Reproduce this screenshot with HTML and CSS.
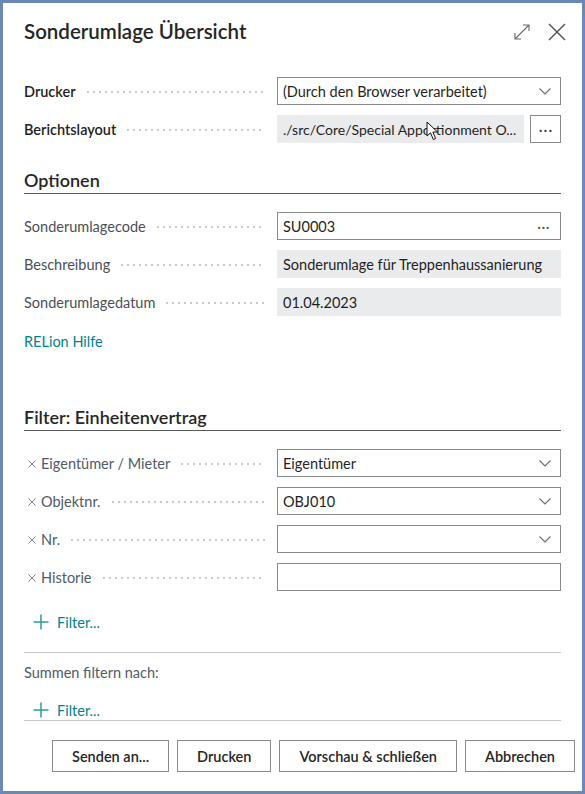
FILE: index.html
```html
<!DOCTYPE html>
<html lang="de">
<head>
<meta charset="utf-8">
<title>Sonderumlage Übersicht</title>
<link rel="stylesheet" href="styles.css">
</head>
<body>
<div class="dialog">
  <header class="header">
    <h1 class="title">Sonderumlage Übersicht</h1>
    <div class="header-icons">
      <svg class="icon-expand" width="18" height="18" viewBox="0 0 18 18" aria-hidden="true">
        <path d="M2 16 L16 2 M10 2 H16 V8 M2 10 V16 H8" fill="none" stroke="#6b6b6b" stroke-width="1.1"/>
      </svg>
      <svg class="icon-close" width="18" height="18" viewBox="0 0 18 18" aria-hidden="true">
        <path d="M1 1 L17 17 M17 1 L1 17" fill="none" stroke="#555" stroke-width="1.5"/>
      </svg>
    </div>
  </header>

  <main class="content">
    <section class="group group-top">
      <div class="row">
        <div class="label strong"><span>Drucker</span><i class="dots"></i></div>
        <div class="field box">
          <span class="value">(Durch den Browser verarbeitet)</span>
          <svg class="chev" width="12" height="7" viewBox="0 0 12 7"><path d="M0.5 0.5 L6 6 L11.5 0.5" fill="none" stroke="#6b6b6b" stroke-width="1.1"/></svg>
        </div>
      </div>
      <div class="row">
        <div class="label strong"><span>Berichtslayout</span><i class="dots"></i></div>
        <div class="field-pair">
          <div class="field readonly cursor-host">
            <span class="value path">./src/Core/Special Apportionment O...</span>
            <svg class="cursor" width="13" height="20" viewBox="0 0 13 20" aria-hidden="true">
              <path d="M1 1 V15 L4.5 11.8 L7.3 18.5 L9.6 17.5 L6.9 11 H11.5 Z" fill="#fff" stroke="#111" stroke-width="1"/>
            </svg>
          </div>
          <div class="dots-btn">···</div>
        </div>
      </div>
    </section>

    <section class="group group-options">
      <h2 class="section-title">Optionen</h2>
      <div class="rows">
        <div class="row">
          <div class="label"><span>Sonderumlagecode</span><i class="dots"></i></div>
          <div class="field box">
            <span class="value">SU0003</span>
            <span class="ellipsis">···</span>
          </div>
        </div>
        <div class="row">
          <div class="label"><span>Beschreibung</span><i class="dots"></i></div>
          <div class="field readonly"><span class="value">Sonderumlage für Treppenhaussanierung</span></div>
        </div>
        <div class="row">
          <div class="label"><span>Sonderumlagedatum</span><i class="dots"></i></div>
          <div class="field readonly"><span class="value">01.04.2023</span></div>
        </div>
        <div class="link-row"><a class="link">RELion Hilfe</a></div>
      </div>
    </section>

    <section class="group group-filter">
      <h2 class="section-title">Filter: Einheitenvertrag</h2>
      <div class="rows">
        <div class="row">
          <div class="label filter-label"><svg class="x" width="8" height="8" viewBox="0 0 8 8"><path d="M0.5 0.5 L7.5 7.5 M7.5 0.5 L0.5 7.5" stroke="#7d828a" stroke-width="1" fill="none"/></svg><span>Eigentümer / Mieter</span><i class="dots"></i></div>
          <div class="field box">
            <span class="value">Eigentümer</span>
            <svg class="chev" width="12" height="7" viewBox="0 0 12 7"><path d="M0.5 0.5 L6 6 L11.5 0.5" fill="none" stroke="#6b6b6b" stroke-width="1.1"/></svg>
          </div>
        </div>
        <div class="row">
          <div class="label filter-label"><svg class="x" width="8" height="8" viewBox="0 0 8 8"><path d="M0.5 0.5 L7.5 7.5 M7.5 0.5 L0.5 7.5" stroke="#7d828a" stroke-width="1" fill="none"/></svg><span>Objektnr.</span><i class="dots"></i></div>
          <div class="field box">
            <span class="value">OBJ010</span>
            <svg class="chev" width="12" height="7" viewBox="0 0 12 7"><path d="M0.5 0.5 L6 6 L11.5 0.5" fill="none" stroke="#6b6b6b" stroke-width="1.1"/></svg>
          </div>
        </div>
        <div class="row">
          <div class="label filter-label"><svg class="x" width="8" height="8" viewBox="0 0 8 8"><path d="M0.5 0.5 L7.5 7.5 M7.5 0.5 L0.5 7.5" stroke="#7d828a" stroke-width="1" fill="none"/></svg><span>Nr.</span><i class="dots"></i></div>
          <div class="field box">
            <span class="value"></span>
            <svg class="chev" width="12" height="7" viewBox="0 0 12 7"><path d="M0.5 0.5 L6 6 L11.5 0.5" fill="none" stroke="#6b6b6b" stroke-width="1.1"/></svg>
          </div>
        </div>
        <div class="row">
          <div class="label filter-label"><svg class="x" width="8" height="8" viewBox="0 0 8 8"><path d="M0.5 0.5 L7.5 7.5 M7.5 0.5 L0.5 7.5" stroke="#7d828a" stroke-width="1" fill="none"/></svg><span>Historie</span><i class="dots"></i></div>
          <div class="field box"><span class="value"></span></div>
        </div>
      </div>
      <div class="add-filter first-add">
        <svg class="plus" width="16" height="16" viewBox="0 0 16 16"><path d="M8 0.5 V15.5 M0.5 8 H15.5" fill="none" stroke="#2a9d9c" stroke-width="1.5"/></svg>
        <span>Filter...</span>
      </div>
    </section>

    <section class="totals">
      <div class="totals-title">Summen filtern nach:</div>
      <div class="add-filter last-add">
        <svg class="plus" width="16" height="16" viewBox="0 0 16 16"><path d="M8 0.5 V15.5 M0.5 8 H15.5" fill="none" stroke="#2a9d9c" stroke-width="1.5"/></svg>
        <span>Filter...</span>
      </div>
    </section>
  </main>

  <footer class="footer">
    <button class="btn">Senden an...</button>
    <button class="btn">Drucken</button>
    <button class="btn">Vorschau &amp; schließen</button>
    <button class="btn">Abbrechen</button>
  </footer>
</div>
</body>
</html>
```

FILE: styles.css
```css
* { box-sizing: border-box; }

html, body {
  margin: 0;
  padding: 0;
}

body {
  background: #6b88b6;
  font-family: "Lato", "Open Sans", "Liberation Sans", sans-serif;
  font-size: 14.5px;
  color: #212121;
  width: 585px;
  height: 794px;
  padding: 3px;
}

.dialog {
  background: #fff;
  width: 579px;
  height: 788px;
  display: flex;
  flex-direction: column;
}

.header {
  display: flex;
  align-items: center;
  justify-content: space-between;
  padding: 16px 16px 0 21px;
  height: 41px;
}

.title {
  margin: 0;
  font-size: 20.5px;
  font-weight: 600;
  line-height: 25px;
  color: #262626;
}

.header-icons {
  display: flex;
  align-items: center;
  gap: 17px;
}

.icon-expand { width: 18px; height: 18px; }
.icon-close { width: 18px; height: 18px; }

.content {
  padding: 0 21px;
  display: flex;
  flex-direction: column;
}

.group-top {
  padding-top: 33px;
  display: flex;
  flex-direction: column;
  gap: 10px;
}

.rows {
  display: flex;
  flex-direction: column;
  gap: 10px;
}

.row {
  display: flex;
  align-items: center;
  height: 28px;
}

.label {
  width: 253px;
  flex: none;
  display: flex;
  align-items: center;
  color: #4a4f57;
  white-space: nowrap;
  padding-right: 12px;
}

.label.strong {
  font-weight: 600;
  color: #1f1f1f;
}

.dots {
  flex: 1;
  height: 2px;
  margin: 2px 0 0 9px;
  background-image: radial-gradient(circle, #cbcbcb 0.75px, transparent 1px);
  background-size: 6px 2px;
  background-repeat: repeat-x;
}

.filter-label {
  color: #505a68;
}

.filter-label .x {
  flex: none;
  margin: 1px 5px 0 4px;
}

.field {
  flex: 1;
  min-width: 0;
  height: 28px;
  display: flex;
  align-items: center;
  padding: 0 8px 0 6px;
  color: #1f1f1f;
  white-space: nowrap;
  overflow: hidden;
}

.field.box {
  border: 1px solid #8a8a8a;
  padding-left: 5px;
}

.field.readonly {
  background: #eaebec;
}

.value {
  flex: 1;
  min-width: 0;
}

.value.path {
  font-size: 14px;
}

.chev {
  margin-right: 1px;
  flex: none;
}

.ellipsis {
  color: #555;
  padding-right: 2px;
  letter-spacing: 0.5px;
}

.field-pair {
  flex: 1;
  min-width: 0;
  display: flex;
  gap: 6px;
  height: 28px;
}

.cursor-host {
  position: relative;
  padding-right: 4px;
}

.cursor {
  position: absolute;
  left: 149px;
  top: 6px;
}

.dots-btn {
  flex: none;
  width: 31px;
  height: 28px;
  border: 1px solid #8a8a8a;
  display: flex;
  align-items: center;
  justify-content: center;
  color: #333;
  letter-spacing: 1px;
  padding-left: 1px;
}

.section-title {
  margin: 0;
  font-size: 18px;
  font-weight: 600;
  line-height: 24px;
  padding-bottom: 1px;
  border-bottom: 1px solid #5a5a5a;
  color: #262626;
  margin-bottom: 18px;
}

.group-options .section-title {
  margin-top: 25px;
}

.group-filter .section-title {
  margin-top: 51px;
}

.link-row {
  height: 28px;
  display: flex;
  align-items: center;
  padding-top: 2px;
}

.link {
  color: #00838f;
  cursor: pointer;
}

.add-filter {
  display: flex;
  align-items: center;
  color: #008489;
  height: 20px;
}

.add-filter .plus {
  margin-left: 9px;
  margin-right: 8px;
}

.first-add {
  margin-top: 21px;
  margin-bottom: 20px;
}

.totals {
  border-top: 1px solid #c8c8c8;
  border-bottom: 1px solid #c8c8c8;
}

.totals-title {
  color: #505a68;
  margin-top: 10px;
  line-height: 20px;
}

.last-add {
  margin-top: 17px;
}

.footer {
  display: flex;
  justify-content: flex-end;
  gap: 8px;
  padding: 19px 7px 0 0;
}

.btn {
  font-family: inherit;
  font-size: 14.5px;
  font-weight: 600;
  color: #262626;
  background: #fff;
  border: 1px solid #8a8a8a;
  height: 32px;
  padding: 0 19px;
  border-radius: 0;
}
```
